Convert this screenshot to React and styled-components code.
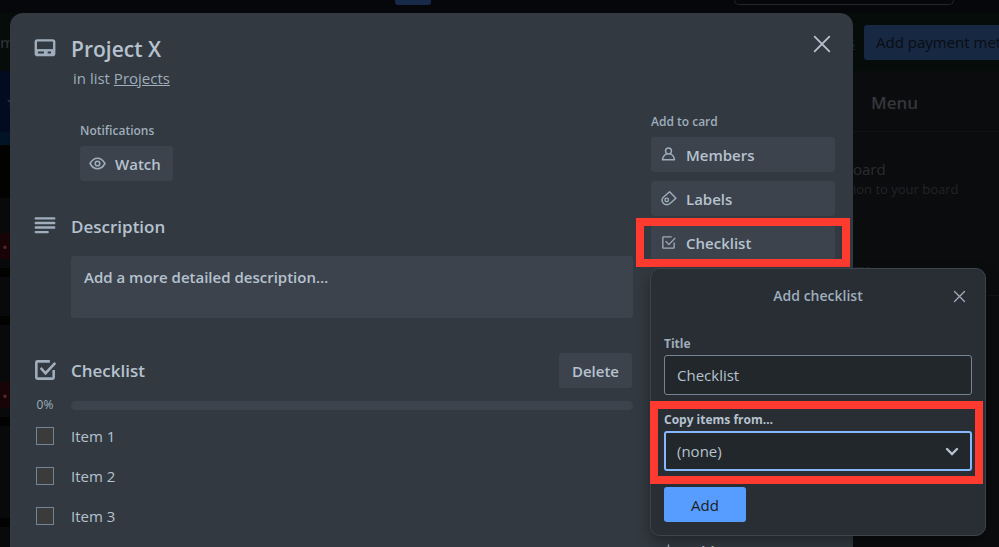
import React from "react";
import styled, { createGlobalStyle } from "styled-components";

const GlobalStyle = createGlobalStyle`
   * {
      box-sizing: border-box;
   }
   body {
      margin: 0;
      background-color: #0b0c0e;
      color: #b6c2cf;
      font-family: "Open Sans", "Noto Sans", sans-serif;
      font-size: 15px;
      line-height: 20px;
   }
   button,
   input,
   select {
      font: inherit;
      color: inherit;
   }
`;

const Page = styled.div`
   position: relative;
   height: 100vh;
   overflow: hidden;
   display: flex;
   flex-direction: column;
`;

const TopBar = styled.header`
   height: 13px;
   flex-shrink: 0;
   display: flex;
   justify-content: space-between;
   align-items: flex-start;
   padding: 0 45px 0 395px;
   background-color: #06070a;
`;

const CreateButton = styled.button`
   width: 36px;
   height: 5px;
   padding: 0;
   border: none;
   border-radius: 0 0 3px 3px;
   background-color: #172a4a;
`;

const SearchBox = styled.input`
   width: 220px;
   height: 5px;
   padding: 0;
   border: 1px solid #22252a;
   border-top: none;
   border-radius: 0 0 5px 5px;
   background-color: transparent;
`;

const Banner = styled.div`
   height: 58px;
   flex-shrink: 0;
   display: flex;
   align-items: center;
   justify-content: space-between;
   background-color: #050c09;
   color: #2c2f33;
   font-weight: 600;
   overflow: hidden;
`;

const BannerActions = styled.div`
   display: flex;
   align-items: center;
   flex-shrink: 0;
   gap: 9px;
   margin-right: -33px;

   a {
      color: #14233c;
   }
`;

const PaymentButton = styled.button`
   width: 168px;
   height: 35px;
   padding: 0 12px;
   border: none;
   border-radius: 3px;
   background-color: #172842;
   color: #090d12;
   font-weight: 400;
   text-align: left;
   white-space: nowrap;
`;

const Board = styled.div`
   flex: 1;
   display: flex;
   justify-content: space-between;
   min-height: 0;
`;

const Lists = styled.div`
   width: 10px;
   display: flex;
   flex-direction: column;
   gap: 9px;
   background-color: #020300;
`;

const BoardHeader = styled.div`
   height: 74px;
   flex-shrink: 0;
   margin-bottom: 44px;
   padding: 20px 0 0 6px;
   border-bottom: 13px solid #031326;
   background-color: #020b20;
   color: #3a3c40;
   overflow: hidden;
`;

const ListCard = styled.div`
   flex: 0 0 ${(props) => props.height}px;
   display: flex;
   flex-direction: column;
   justify-content: flex-end;
   padding-bottom: 9px;
   background-color: #08090b;
`;

const Cover = styled.div`
   height: 26px;
   padding: 4px 0 0 2px;
   background-color: #180406;
   color: #55282b;
`;

const MenuPanel = styled.aside`
   width: 146px;
   background-color: #0b0c0e;
   color: #2a2c30;
`;

const MenuTitle = styled.h2`
   margin: 0;
   padding: 22px 18px 18px;
   border-bottom: 1px solid #101214;
   font-size: 17px;
   font-weight: 600;
   line-height: 20px;
   color: #35373b;
`;

const MenuItem = styled.div`
   height: 164px;
   padding-top: 27px;
   border-bottom: 1px solid #121417;
   font-size: 13px;
   color: #222428;
`;

const MenuItemTitle = styled.div`
   font-size: 15px;
   color: #2a2c30;
`;

const MenuItemNote = styled.div`
   padding-top: 60px;
`;

const Modal = styled.section`
   position: absolute;
   top: 13px;
   left: 10px;
   right: 146px;
   min-height: 600px;
   padding: 24px 18px 0 24px;
   border-radius: 13px;
   background-color: #323940;
`;

const CloseButton = styled.button`
   position: absolute;
   top: 20px;
   right: 20px;
   display: flex;
   padding: 0;
   border: none;
   background: none;
`;

const ModalHeader = styled.header`
   display: flex;
   gap: 15px;
`;

const IconCell = styled.div`
   width: 22px;
   height: 24px;
   flex-shrink: 0;
   display: flex;
   align-items: center;
   justify-content: center;
   padding-bottom: 2px;
   color: #9fadbc;

   svg {
      flex-shrink: 0;
   }
`;

const ModalTitle = styled.h1`
   margin: 0;
   font-size: 21px;
   font-weight: 600;
   line-height: 24px;
`;

const InList = styled.p`
   margin: 0;
   padding: 7px 2px 0;
   color: #9fadbc;

   a {
      color: inherit;
   }
`;

const Columns = styled.div`
   display: flex;
   align-items: flex-start;
   gap: 18px;
   padding-top: 25px;
`;

const Main = styled.main`
   flex: 1;
   min-width: 0;
   padding-top: 9px;
`;

const Sidebar = styled.aside`
   width: 184px;
`;

const SmallHeading = styled.h3`
   margin: 0 0 6px;
   font-size: 12px;
   font-weight: 600;
   line-height: 18px;
   color: #9fadbc;
`;

const Notifications = styled.div`
   padding-left: 46px;
`;

const GreyButton = styled.button`
   display: flex;
   align-items: center;
   gap: 9px;
   width: ${(props) => (props.$wide ? "100%" : "auto")};
   height: 35px;
   padding: 0 ${(props) => (props.$wide ? 9 : 13)}px;
   border: none;
   border-radius: 3px;
   background-color: ${(props) => (props.$plain ? "transparent" : "#3c434c")};
   font-weight: 600;
   cursor: pointer;

   svg {
      color: #9fadbc;
   }
`;

const WatchButton = styled(GreyButton)`
   padding: 0 12px 0 9px;
`;

const SectionHeader = styled.div`
   display: flex;
   align-items: center;
   gap: 15px;
   height: 35px;
   margin-top: ${(props) => props.$space}px;
   padding-right: 1px;
`;

const SectionTitle = styled.h2`
   flex: 1;
   margin: 0;
   font-size: 17px;
   font-weight: 600;
   line-height: 24px;
`;

const DescriptionButton = styled.button`
   display: block;
   width: calc(100% - 37px);
   height: 62px;
   margin: 12px 0 0 37px;
   padding: 11px 13px 31px;
   border: none;
   border-radius: 3px;
   background-color: #3c434c;
   font-weight: 600;
   text-align: left;
   cursor: pointer;
`;

const ProgressRow = styled.div`
   display: flex;
   align-items: center;
   gap: 15px;
   height: 18px;
   margin-top: 8px;
   font-size: 12px;
   color: #9fadbc;
`;

const Percent = styled.span`
   width: 22px;
   text-align: center;
   white-space: nowrap;
`;

const Bar = styled.div`
   flex: 1;
   height: 9px;
   border-radius: 5px;
   background-color: #3c434c;
`;

const Items = styled.ul`
   margin: 0;
   padding: 12px 0 0 2px;
   list-style: none;
   display: flex;
   flex-direction: column;
   gap: 20px;
`;

const Item = styled.li`
   label {
      display: flex;
      align-items: center;
      gap: 17px;
   }
`;

const Checkbox = styled.input`
   appearance: none;
   width: 18px;
   height: 18px;
   margin: 0;
   border: 1px solid #738496;
   background-color: #3b3b3b;
`;

const CardActions = styled.div`
   display: flex;
   flex-direction: column;
   gap: 9px;
`;

const Anchor = styled.div`
   position: relative;
`;

const Highlight = styled.div`
   position: absolute;
   inset: ${(props) => props.$inset};
   border: 8px solid #ff3b30;
   pointer-events: none;
`;

const LowerActions = styled.div`
   padding-top: 273px;
`;

const Popover = styled.div`
   position: absolute;
   top: 43px;
   left: -1px;
   width: 336px;
   padding: 13px;
   border: 1px solid #3b444c;
   border-radius: 10px;
   background-color: #282e33;
   box-shadow: 0 6px 14px rgba(0, 0, 0, 0.35);
`;

const PopoverHeader = styled.header`
   display: grid;
   grid-template-columns: 26px 1fr 26px;
   align-items: center;
   height: 28px;
   margin-bottom: 25px;
   color: #9fadbc;
`;

const PopoverTitle = styled.h2`
   grid-column: 2;
   margin: 0;
   font-size: 14px;
   font-weight: 600;
   text-align: center;
`;

const PopoverClose = styled.button`
   display: flex;
   justify-content: center;
   padding: 0;
   border: none;
   background: none;
`;

const Field = styled.div`
   position: relative;
   margin-bottom: 16px;

   label {
      display: block;
      margin-bottom: 2px;
      font-size: 12px;
      font-weight: 700;
      line-height: 18px;
      color: ${(props) => (props.$active ? "#b6c2cf" : "#9fadbc")};
   }
`;

const TextInput = styled.input`
   display: block;
   width: 100%;
   height: 40px;
   padding: 0 12px;
   border: 1px solid #738496;
   border-radius: 3px;
   background-color: #22272b;
   outline: none;
`;

const Select = styled.select`
   appearance: none;
   display: block;
   width: 100%;
   height: 40px;
   padding: 0 11px;
   border: 2px solid #85b8ff;
   border-radius: 3px;
   background-color: #22272b;
   outline: none;
`;

const Chevron = styled.svg`
   position: absolute;
   right: 13px;
   bottom: 15px;
   pointer-events: none;
`;

const AddButton = styled.button`
   display: block;
   width: 82px;
   height: 35px;
   border: none;
   border-radius: 3px;
   background-color: #579dff;
   color: #1d2125;
   font-weight: 500;
   cursor: pointer;
`;

const Svg = ({ size, children, ...rest }) => (
   <svg
      width={size}
      height={size}
      viewBox="0 0 24 24"
      fill="none"
      stroke="currentColor"
      strokeWidth="2"
      strokeLinecap="round"
      aria-hidden="true"
      {...rest}
   >
      {children}
   </svg>
);

const CardIcon = () => (
   <Svg size={26}>
      <rect x="3.500" y="5" width="17" height="13.500" rx="1.500" strokeWidth="2.200" />
      <path d="M3 13h18v5.500H3z" fill="currentColor" stroke="none" />
      <path d="M5.500 16.200h5.500M14.500 16.200h3" stroke="#323940" strokeWidth="1.800" strokeLinecap="butt" />
   </Svg>
);

const EyeIcon = () => (
   <Svg size={17} strokeWidth="2.2">
      <path d="M1.500 12C4 7.500 7.500 4.500 12 4.500s8 3 10.500 7.500C20 16.500 16.500 19.500 12 19.500s-8-3-10.500-7.500z" />
      <circle cx="12" cy="12" r="3.300" />
   </Svg>
);

const LinesIcon = () => (
   <Svg size={26} strokeWidth="2.200">
      <path d="M3.500 5h17M3.500 9.200h17M3.500 13.400h17M3.500 17.600h11" />
   </Svg>
);

const CheckIcon = ({ size, bold }) => (
   <Svg size={size} strokeLinecap="butt" strokeWidth={bold ? 2.4 : 1.9}>
      <path d="M16.500 4H5a1 1 0 0 0-1 1v14a1 1 0 0 0 1 1h14a1 1 0 0 0 1-1v-7" />
      <path d="M8 10l4.500 5L21.500 5.500" />
   </Svg>
);

const MemberIcon = () => (
   <Svg size={17}>
      <circle cx="12" cy="7" r="4.200" />
      <path d="M9.500 11C6 12.500 4 15.500 3.500 19.500h17C20 15.500 18 12.500 14.500 11" strokeLinejoin="round" />
   </Svg>
);

const LabelIcon = () => (
   <Svg size={17}>
      <path
         d="M4 11L13.500 2.500l9 9-7.500 7c-3 3-7.500 3-10 .500s-3-5-1-8z"
         strokeLinejoin="round"
      />
      <circle cx="9.500" cy="14" r="2.500" />
   </Svg>
);

const PlusIcon = () => (
   <Svg size={17}>
      <path d="M12 4v16M4 12h16" />
   </Svg>
);

const App = () => {
   return (
      <>
         <GlobalStyle />
         <Page>
            <TopBar>
               <CreateButton aria-label="Create" />
               <SearchBox aria-label="Search" />
            </TopBar>
            <Banner>
               <span>m</span>
               <BannerActions>
                  <a href="#plans">s</a>
                  <PaymentButton>Add payment method</PaymentButton>
               </BannerActions>
            </Banner>
            <Board>
               <Lists>
                  <BoardHeader>★</BoardHeader>
                  <ListCard height={70}>
                     <Cover>•</Cover>
                  </ListCard>
                  <ListCard height={39} />
                  <ListCard height={92}>
                     <Cover>•</Cover>
                  </ListCard>
                  <ListCard height={92} />
                  <ListCard height={92} />
               </Lists>
               <MenuPanel>
                  <MenuTitle>Menu</MenuTitle>
                  <MenuItem>
                     <MenuItemTitle>oard</MenuItemTitle>
                     ion to your board
                     <MenuItemNote>ms</MenuItemNote>
                  </MenuItem>
               </MenuPanel>
            </Board>

            <Modal>
               <CloseButton aria-label="Close card">
                  <Svg size={22}>
                     <path d="M4 4l16 16M20 4L4 20" />
                  </Svg>
               </CloseButton>
               <ModalHeader>
                  <IconCell>
                     <CardIcon />
                  </IconCell>
                  <ModalTitle>Project X</ModalTitle>
               </ModalHeader>
               <ModalHeader>
                  <IconCell />
                  <InList>
                     in list <a href="#projects">Projects</a>
                  </InList>
               </ModalHeader>

               <Columns>
                  <Main>
                     <Notifications>
                        <SmallHeading>Notifications</SmallHeading>
                        <WatchButton>
                           <EyeIcon />
                           Watch
                        </WatchButton>
                     </Notifications>

                     <SectionHeader $space={28}>
                        <IconCell>
                           <LinesIcon />
                        </IconCell>
                        <SectionTitle>Description</SectionTitle>
                     </SectionHeader>
                     <DescriptionButton>
                        Add a more detailed description…
                     </DescriptionButton>

                     <SectionHeader $space={35}>
                        <IconCell>
                           <CheckIcon size={26} bold />
                        </IconCell>
                        <SectionTitle>Checklist</SectionTitle>
                        <GreyButton>Delete</GreyButton>
                     </SectionHeader>
                     <ProgressRow>
                        <Percent>0%</Percent>
                        <Bar />
                     </ProgressRow>
                     <Items>
                        {["Item 1", "Item 2", "Item 3", "Item 4"].map((name) => (
                           <Item key={name}>
                              <label>
                                 <Checkbox type="checkbox" />
                                 {name}
                              </label>
                           </Item>
                        ))}
                     </Items>
                  </Main>

                  <Sidebar>
                     <SmallHeading>Add to card</SmallHeading>
                     <CardActions>
                        <GreyButton $wide>
                           <MemberIcon />
                           Members
                        </GreyButton>
                        <GreyButton $wide>
                           <LabelIcon />
                           Labels
                        </GreyButton>
                        <Anchor>
                           <GreyButton $wide>
                              <CheckIcon size={17} />
                              Checklist
                           </GreyButton>
                           <Highlight $inset="-7px -15px" />
                           <Popover>
                              <PopoverHeader>
                                 <PopoverTitle>Add checklist</PopoverTitle>
                                 <PopoverClose aria-label="Close">
                                    <Svg size={15}>
                                       <path d="M4 4l16 16M20 4L4 20" />
                                    </Svg>
                                 </PopoverClose>
                              </PopoverHeader>
                              <Field>
                                 <label htmlFor="title">Title</label>
                                 <TextInput id="title" defaultValue="Checklist" />
                              </Field>
                              <Field $active>
                                 <label htmlFor="copy">Copy items from…</label>
                                 <Select id="copy">
                                    <option>(none)</option>
                                 </Select>
                                 <Chevron
                                    width="14"
                                    height="9"
                                    viewBox="0 0 14 9"
                                    fill="none"
                                    stroke="#b6c2cf"
                                    strokeWidth="2.400"
                                    strokeLinecap="round"
                                 >
                                    <path d="M2 2l5 5 5-5" />
                                 </Chevron>
                                 <Highlight $inset="-10px -11px -13px -14px" />
                              </Field>
                              <AddButton>Add</AddButton>
                           </Popover>
                        </Anchor>
                     </CardActions>
                     <LowerActions>
                        <GreyButton $wide $plain>
                           <PlusIcon />
                           Add Power-Ups
                        </GreyButton>
                     </LowerActions>
                  </Sidebar>
               </Columns>
            </Modal>
         </Page>
      </>
   );
};

export default App;
